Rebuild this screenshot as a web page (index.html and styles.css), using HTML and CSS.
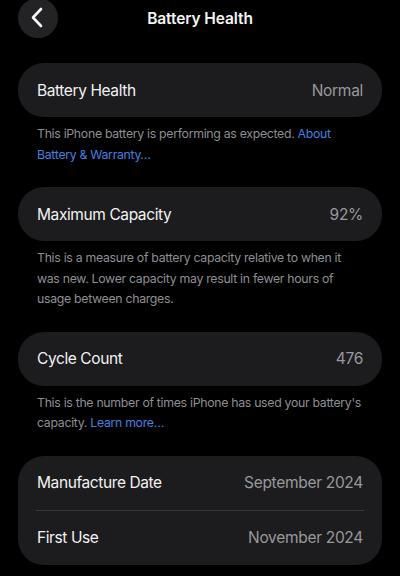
FILE: index.html
```html
<!DOCTYPE html>
<html>
<head>
<meta charset="utf-8">
<link rel="stylesheet" href="styles.css">
</head>
<body>
<div class="nav">
  <button class="back" aria-label="Back">
    <svg width="40" height="40" viewBox="0 0 40 40"><path d="M23 11 L15 19.5 L23 28" fill="none" stroke="#f5f5f5" stroke-width="2.6" stroke-linecap="round" stroke-linejoin="round"/></svg>
  </button>
  <div class="title">Battery Health</div>
  <div class="spacer"></div>
</div>
<main class="content">
  <section class="card">
    <div class="row"><span class="label">Battery Health</span><span class="value">Normal</span></div>
  </section>
  <p class="note">This iPhone battery is performing as expected. <span class="link">About Battery &amp; Warranty…</span></p>

  <section class="card">
    <div class="row"><span class="label">Maximum Capacity</span><span class="value">92%</span></div>
  </section>
  <p class="note">This is a measure of battery capacity relative to when it was new. Lower capacity may result in fewer hours of usage between charges.</p>

  <section class="card">
    <div class="row"><span class="label">Cycle Count</span><span class="value">476</span></div>
  </section>
  <p class="note">This is the number of times iPhone has used your battery's capacity. <span class="link">Learn more…</span></p>

  <section class="card">
    <div class="row"><span class="label">Manufacture Date</span><span class="value">September 2024</span></div>
    <div class="divider"></div>
    <div class="row"><span class="label">First Use</span><span class="value">November 2024</span></div>
  </section>
</main>
</body>
</html>
```
FILE: styles.css
```css
html, body {
  margin: 0;
  padding: 0;
  background: #000;
  height: 100%;
  overflow: hidden;
}
body {
  font-family: Inter, "Noto Sans", "Liberation Sans", sans-serif;
  color: #f2f2f2;
}
.nav {
  display: grid;
  grid-template-columns: 40px 1fr 40px;
  align-items: center;
  padding: 0 18px;
  margin-top: -2px;
  height: 40px;
}
.back {
  width: 40px;
  height: 40px;
  border-radius: 50%;
  border: none;
  padding: 0;
  background: #232325;
  display: flex;
  align-items: center;
  justify-content: center;
}
.back svg { display: block; }
.title {
  text-align: center;
  font-size: 15.5px;
  font-weight: 600;
  color: #f5f5f5;
  letter-spacing: -0.1px;
}
.content {
  padding: 25px 18px 0;
}
.card {
  background: #1c1c1e;
  border-radius: 26px;
}
.row {
  height: 54px;
  display: flex;
  align-items: center;
  justify-content: space-between;
  padding: 0 19px;
}
.label {
  font-size: 15.5px;
  color: #f2f2f2;
  letter-spacing: -0.4px;
}
.value {
  font-size: 15.5px;
  color: #98989d;
  letter-spacing: -0.3px;
}
.divider {
  height: 1px;
  background: #38383a;
  margin: 0 18px;
}
.note {
  margin: 0 0 22px;
  padding: 7px 19px 0;
  font-size: 12.3px;
  line-height: 20.5px;
  color: #8e8e93;
  letter-spacing: -0.3px;
}
.link {
  color: #4281e0;
}
```
